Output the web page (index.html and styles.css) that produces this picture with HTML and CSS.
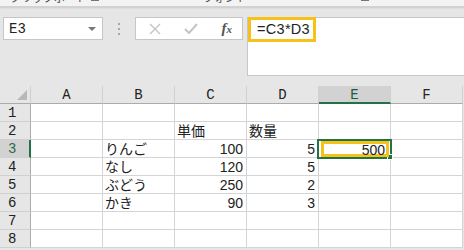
FILE: index.html
```html
<!DOCTYPE html>
<html lang="ja">
<head>
    <meta charset="UTF-8">
    <title>Excel - 数式バー</title>
    <link rel="stylesheet" href="styles.css">
</head>
<body>

    <!-- リボン (下端だけ見えている) -->
    <div class="ribbon">
        <div class="ribbon-inner">
            <span class="group clip">クリップボード</span>
            <span class="launcher"></span>
            <span class="group font">フォント</span>
            <span class="launcher right"></span>
        </div>
    </div>

    <!-- 数式バー -->
    <div class="formula-bar">
        <div class="name-box">
            <span>E3</span>
            <span class="arrow"></span>
        </div>
        <div class="dots"><i></i><i></i><i></i></div>
        <div class="fx-buttons">
            <svg class="icon" width="12" height="12" viewBox="0 0 12 12">
                <path d="M1 1 L11 11 M11 1 L1 11" stroke="#c4c4c4" stroke-width="1.4" fill="none"/>
            </svg>
            <svg class="icon" width="14" height="12" viewBox="0 0 14 12">
                <path d="M1 6 L5 10 L13 1" stroke="#c4c4c4" stroke-width="2" fill="none"/>
            </svg>
            <span class="fx">f<small>x</small></span>
        </div>
        <div class="formula-input">
            <span class="formula-text">=C3*D3</span>
        </div>
    </div>

    <!-- シート -->
    <div class="sheet">
        <div class="corner"><span class="tri"></span></div>
        <div class="col-head">A</div>
        <div class="col-head">B</div>
        <div class="col-head">C</div>
        <div class="col-head">D</div>
        <div class="col-head active">E</div>
        <div class="col-head">F</div>

        <div class="row-head">1</div>
        <div class="cell"></div><div class="cell"></div><div class="cell"></div>
        <div class="cell"></div><div class="cell"></div><div class="cell"></div>

        <div class="row-head">2</div>
        <div class="cell"></div><div class="cell"></div>
        <div class="cell">単価</div><div class="cell">数量</div>
        <div class="cell"></div><div class="cell"></div>

        <div class="row-head active">3</div>
        <div class="cell"></div><div class="cell">りんご</div>
        <div class="cell num">100</div><div class="cell num">5</div>
        <div class="cell num selected">
            <div class="sel-border"><span class="handle"></span></div>
            <div class="mark">500</div>
        </div>
        <div class="cell"></div>

        <div class="row-head">4</div>
        <div class="cell"></div><div class="cell">なし</div>
        <div class="cell num">120</div><div class="cell num">5</div>
        <div class="cell"></div><div class="cell"></div>

        <div class="row-head">5</div>
        <div class="cell"></div><div class="cell">ぶどう</div>
        <div class="cell num">250</div><div class="cell num">2</div>
        <div class="cell"></div><div class="cell"></div>

        <div class="row-head">6</div>
        <div class="cell"></div><div class="cell">かき</div>
        <div class="cell num">90</div><div class="cell num">3</div>
        <div class="cell"></div><div class="cell"></div>

        <div class="row-head">7</div>
        <div class="cell"></div><div class="cell"></div><div class="cell"></div>
        <div class="cell"></div><div class="cell"></div><div class="cell"></div>

        <div class="row-head">8</div>
        <div class="cell"></div><div class="cell"></div><div class="cell"></div>
        <div class="cell"></div><div class="cell"></div><div class="cell"></div>
    </div>

</body>
</html>
```

FILE: styles.css
```css
body {
    margin: 0;
    width: 464px;
    height: 250px;
    overflow: hidden;
    background: #e6e6e6;
    font-family: "Liberation Sans", "Noto Sans CJK JP", sans-serif;
    color: #222;
}
.ribbon {
    height: 6px;
    overflow: hidden;
    background: #f3f3f3;
    border-bottom: 1px solid #d2d2d2;
    box-shadow: 0 1px 2px rgba(0, 0, 0, 0.12);
}
.ribbon-inner {
    display: flex;
    align-items: center;
    margin-top: -9px;
    height: 12px;
    font-family: "Noto Sans CJK JP", sans-serif;
    font-size: 11px;
    color: #444;
}
.group.clip {
    margin-left: 10px;
}
.launcher {
    width: 6px;
    height: 6px;
    border: 1px solid #777;
    margin-left: 4px;
}
.group.font {
    margin-left: 104px;
}
.launcher.right {
    margin-left: 114px;
}
.formula-bar {
    display: flex;
    align-items: flex-start;
    padding: 10px 0 0 3px;
}
.name-box {
    width: 100px;
    height: 23px;
    box-sizing: border-box;
    background: white;
    border: 1px solid #c6c6c6;
    display: flex;
    align-items: center;
    justify-content: space-between;
    padding: 0 6px 0 5px;
    font-family: "Liberation Mono", monospace;
    font-size: 14px;
    color: #222;
}
.arrow {
    width: 0;
    height: 0;
    border-left: 4px solid transparent;
    border-right: 4px solid transparent;
    border-top: 4px solid #777;
}
.dots {
    width: 32px;
    height: 23px;
    display: flex;
    flex-direction: column;
    align-items: center;
    justify-content: center;
    gap: 3px;
}
.dots i {
    width: 2px;
    height: 2px;
    background: #a8a8a8;
}
.fx-buttons {
    width: 108px;
    height: 23px;
    box-sizing: border-box;
    background: white;
    border: 1px solid #c6c6c6;
    display: flex;
    align-items: center;
    justify-content: space-between;
    padding: 0 10px 0 13px;
}
.fx {
    font-family: "Liberation Serif", serif;
    font-style: italic;
    font-weight: bold;
    font-size: 15px;
    color: #555;
}
.fx small {
    font-size: 11px;
}
.formula-input {
    flex: 1;
    margin-left: 4px;
    height: 59px;
    box-sizing: border-box;
    background: white;
    border: 1px solid #c6c6c6;
    border-right: none;
}
.formula-text {
    display: inline-block;
    margin-top: -1px;
    width: 68px;
    height: 25px;
    box-sizing: border-box;
    border: 3px solid #f6c21a;
    padding-left: 6px;
    font-size: 14.5px;
    line-height: 19px;
    letter-spacing: 0.3px;
    color: #222;
}
.sheet {
    margin-top: 10px;
    display: grid;
    grid-template-columns: 31px repeat(6, 72px);
    grid-auto-rows: 18px;
}
.corner {
    position: relative;
    border-right: 1px solid #d0d0d0;
    border-bottom: 1px solid #ababab;
}
.tri {
    position: absolute;
    right: 3px;
    bottom: 3px;
    width: 0;
    height: 0;
    border-left: 10px solid transparent;
    border-bottom: 10px solid #b8b8b8;
}
.col-head {
    border-right: 1px solid #d0d0d0;
    border-bottom: 1px solid #ababab;
    text-align: center;
    font-family: "Liberation Mono", monospace;
    font-size: 14px;
    line-height: 18px;
    color: #222;
}
.col-head.active {
    background: #d2d2d2;
    border-bottom: 2px solid #217346;
    color: #1d5c36;
}
.row-head {
    border-right: 1px solid #ababab;
    border-bottom: 1px solid #d0d0d0;
    padding-left: 8px;
    font-family: "Liberation Mono", monospace;
    font-size: 14px;
    line-height: 18px;
    color: #222;
}
.row-head.active {
    background: #d2d2d2;
    border-right: 2px solid #217346;
    color: #2d6a45;
}
.cell {
    background: white;
    border-right: 1px solid #d4d4d4;
    border-bottom: 1px solid #d4d4d4;
    padding: 0 2px;
    font-size: 14px;
    line-height: 19px;
    white-space: nowrap;
}
.num {
    text-align: right;
    padding-right: 3px;
}
.selected {
    position: relative;
    padding: 0;
}
.sel-border {
    position: absolute;
    left: -2px;
    top: -1px;
    right: -2px;
    bottom: -2px;
    border: 2px solid #217346;
    z-index: 1;
}
.handle {
    position: absolute;
    right: -3px;
    bottom: -3px;
    width: 4px;
    height: 4px;
    background: #217346;
    border: 1px solid white;
}
.mark {
    position: absolute;
    left: 2px;
    top: 1px;
    right: 1px;
    bottom: 0;
    border: 3px solid #f6c21a;
    padding-right: 1px;
    line-height: 12px;
    z-index: 2;
}
```
